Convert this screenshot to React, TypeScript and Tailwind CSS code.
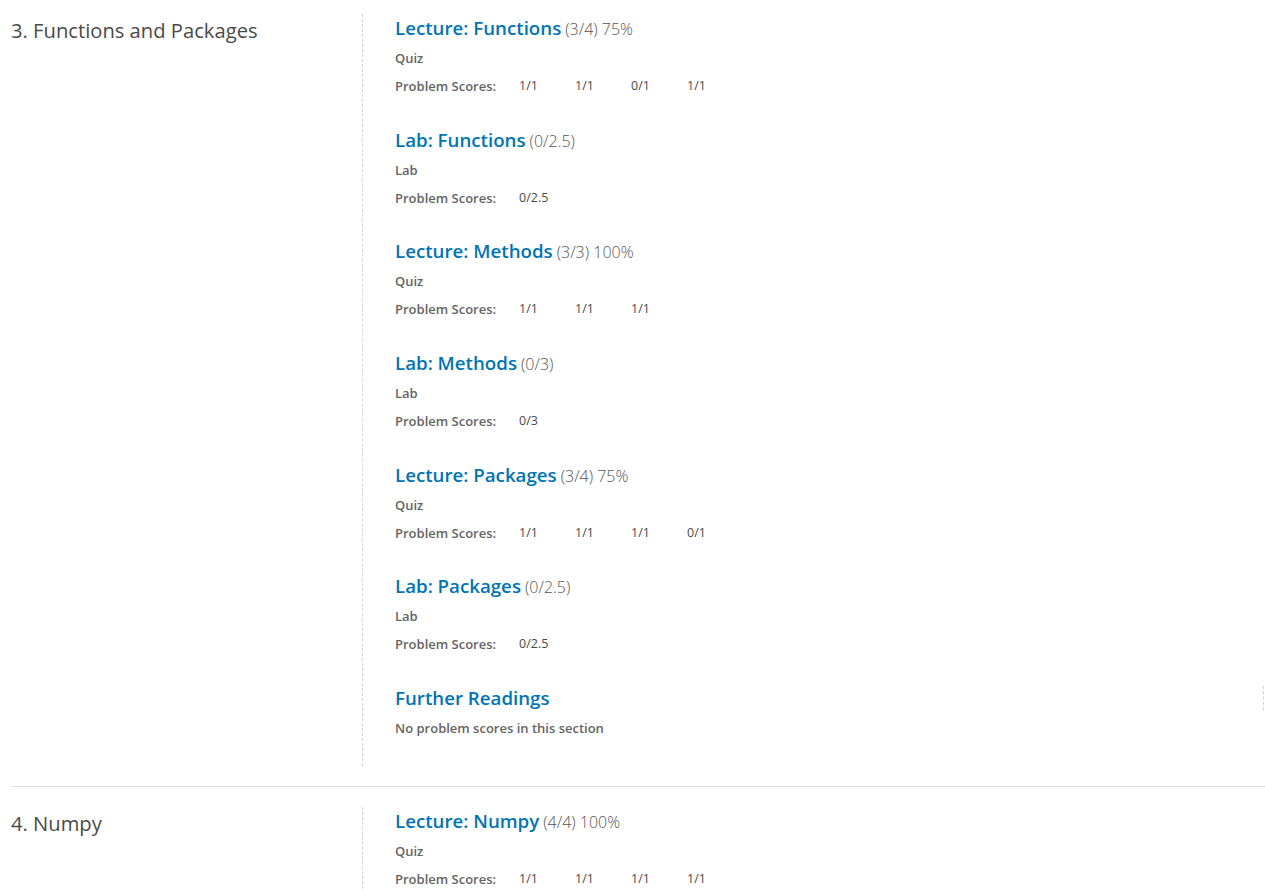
import React from "react";

type Entry = {
  title: string;
  detail: string;
  kind?: string;
  scores?: string[];
};

const sections: { name: string; entries: Entry[] }[] = [
  {
    name: "3. Functions and Packages",
    entries: [
      { title: "Lecture: Functions", detail: "(3/4) 75%", kind: "Quiz", scores: ["1/1", "1/1", "0/1", "1/1"] },
      { title: "Lab: Functions", detail: "(0/2.5)", kind: "Lab", scores: ["0/2.5"] },
      { title: "Lecture: Methods", detail: "(3/3) 100%", kind: "Quiz", scores: ["1/1", "1/1", "1/1"] },
      { title: "Lab: Methods", detail: "(0/3)", kind: "Lab", scores: ["0/3"] },
      { title: "Lecture: Packages", detail: "(3/4) 75%", kind: "Quiz", scores: ["1/1", "1/1", "1/1", "0/1"] },
      { title: "Lab: Packages", detail: "(0/2.5)", kind: "Lab", scores: ["0/2.5"] },
      { title: "Further Readings", detail: "" },
    ],
  },
  {
    name: "4. Numpy",
    entries: [
      { title: "Lecture: Numpy", detail: "(4/4) 100%", kind: "Quiz", scores: ["1/1", "1/1", "1/1", "1/1"] },
    ],
  },
];

function EntryBlock({ entry, last }: { entry: Entry; last: boolean }) {
  return (
    <div className={last ? "" : "mb-[29.66px]"}>
      <h3 className="flex items-baseline h-[28px] leading-[28px] text-[18.7px] font-semibold text-[#0075b4]">
        {entry.title}
        {entry.detail && (
          <span className="ml-[4px] leading-[28px] text-[16px] text-[#555555] font-light">
            {entry.detail}
          </span>
        )}
      </h3>
      {entry.scores ? (
        <>
          <p className="mt-[6px] leading-[20px] text-[13px] font-semibold text-[#646464]">
            {entry.kind}
          </p>
          <div className="mt-[8px] flex leading-[20px] text-[13px] text-[#4a4a4a]">
            <span className="w-[124px] font-semibold text-[#646464]">Problem Scores:</span>
            {entry.scores.map((s, i) => (
              <span key={i} className="w-[56px] text-[12.5px]">
                {s}
              </span>
            ))}
          </div>
        </>
      ) : (
        <div className="mt-[6px] flex justify-between items-start">
          <p className="leading-[20px] text-[13px] font-semibold text-[#646464]">
            No problem scores in this section
          </p>
          <div className="-mt-[32px] mr-[1px] h-[24px] border-r border-dashed border-[#d0d0d0]" />
        </div>
      )}
    </div>
  );
}

export default function App() {
  return (
    <div
      className="min-h-screen bg-white pl-[11px] pt-[14px]"
      style={{ fontFamily: '"Open Sans", sans-serif' }}
    >
      {sections.map((section, si) => (
        <div key={section.name}>
          {si > 0 && <div className="mt-[20px] mb-[20px] border-t border-[#dddddd]" />}
          <div className="flex">
            <div className="w-[351px] shrink-0">
              <h2 className="leading-[32px] text-[20.2px] text-[#4a4a4a]">{section.name}</h2>
            </div>
            <div
              className={
                "flex-1 border-l border-dashed border-[#d5d5d5] pl-[32px] " +
                (si === 0 ? "pb-[28px]" : "")
              }
            >
              {section.entries.map((e, i) => (
                <EntryBlock key={e.title} entry={e} last={i === section.entries.length - 1} />
              ))}
            </div>
          </div>
        </div>
      ))}
    </div>
  );
}
